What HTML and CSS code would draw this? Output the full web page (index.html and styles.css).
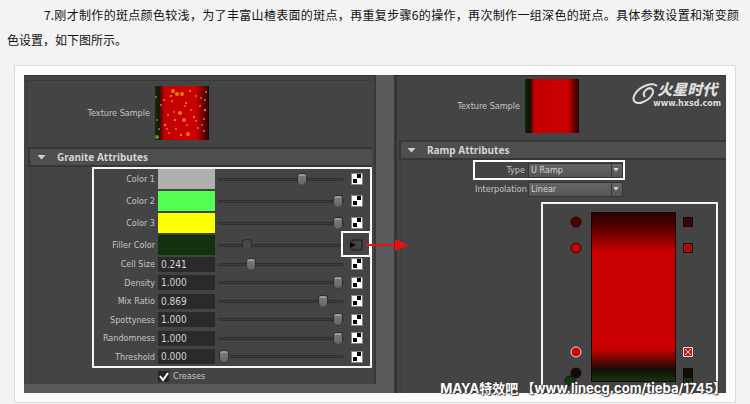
FILE: index.html
```html
<!DOCTYPE html>
<html lang="zh-CN">
<head>
<meta charset="utf-8">
<title>步骤 7</title>
<link rel="stylesheet" href="styles.css">
</head>
<body>
<svg class="defs" aria-hidden="true">
  <symbol id="checker" viewBox="0 0 12 12"><rect width="12" height="12" fill="#888"/><rect x="1" y="1" width="10" height="10" fill="#fff"/><path d="M6 1h4v4H6zM2 6h4v4H2z" fill="#000"/></symbol>
</svg>
<p class="step"><span class="line full">7.刚才制作的斑点颜色较浅，为了丰富山楂表面的斑点，再重复步骤6的操作，再次制作一组深色的斑点。具体参数设置和渐变颜</span><span class="line">色设置，如下图所示。</span></p>

<figure class="card">
  <div class="shot">
    <section class="pane granite">
      <div class="editor">
        <div class="sample">
          <span class="sample-label">Texture Sample</span>
          <svg class="swatch" viewBox="0 0 54 54">
            <defs>
              <linearGradient id="g1"><stop offset="0" stop-color="#102c10"/><stop offset=".08" stop-color="#1c1404"/><stop offset=".17" stop-color="#c40000"/><stop offset=".76" stop-color="#cc0000"/><stop offset="1" stop-color="#260300"/></linearGradient>
            </defs>
            <rect width="54" height="54" fill="url(#g1)"/>
            <g fill="#e87a10"><circle cx="18" cy="5" r="2"/><circle cx="22" cy="8" r="2"/><circle cx="27" cy="8" r="2"/><circle cx="9" cy="14" r="1"/><circle cx="17" cy="15" r="1"/><circle cx="25" cy="27" r="2"/><circle cx="13" cy="29" r="1"/><circle cx="36" cy="24" r="1"/><circle cx="45" cy="20" r="1"/><circle cx="32" cy="39" r="1"/><circle cx="21" cy="43" r="1"/><circle cx="14" cy="47" r="1"/><circle cx="33" cy="48" r="2"/><circle cx="49" cy="33" r="1"/><circle cx="43" cy="42" r="1"/><circle cx="41" cy="10" r="1"/></g>
            <g fill="#e8b020"><circle cx="16" cy="10" r="1"/><circle cx="31" cy="17" r="1"/><circle cx="20" cy="34" r="1"/><circle cx="39" cy="31" r="1"/><circle cx="26" cy="49" r="1"/><circle cx="50" cy="24" r="1"/><circle cx="35" cy="5" r="1"/><circle cx="10" cy="39" r="1"/></g>
            <g fill="#d76b78"><circle cx="6" cy="19" r="1"/><circle cx="29" cy="34" r="2"/><circle cx="30" cy="20" r="1"/><circle cx="51" cy="6" r="1"/><circle cx="50" cy="14" r="1"/><circle cx="41" cy="35" r="1"/><circle cx="19" cy="26" r="1"/><circle cx="49" cy="45" r="1"/><circle cx="12" cy="43" r="1"/></g>
            <g fill="#5f9a12"><circle cx="2" cy="34" r="1"/><circle cx="2" cy="51" r="2"/><circle cx="1" cy="11" r="1"/><circle cx="4" cy="43" r="1"/><circle cx="47" cy="39" r="1"/><circle cx="46" cy="12" r="1"/></g>
          </svg>
        </div>
        <h2 class="bar"><span class="caret"></span>Granite Attributes</h2>
        <div class="body">
          <div class="marked">
            <div class="colors">
              <div class="row"><label for="c1">Color 1</label><span class="chip gray"></span><input id="c1" type="range" value="68"><svg class="map"><use href="#checker"/></svg></div>
              <div class="row"><label for="c2">Color 2</label><span class="chip green"></span><input id="c2" type="range" value="100"><svg class="map"><use href="#checker"/></svg></div>
              <div class="row"><label for="c3">Color 3</label><span class="chip yellow"></span><input id="c3" type="range" value="100"><svg class="map"><use href="#checker"/></svg></div>
              <div class="row linked"><label for="c4">Filler Color</label><span class="chip dark"></span><input id="c4" type="range" value="20" class="off">
                <svg class="map" viewBox="0 0 12 12"><path d="M1 3V1h10v10H1V9" fill="none" stroke="#181818"/><path d="M-1 3l6 3-6 3z" fill="#000"/></svg>
                <span class="callout"></span>
                <svg class="arrow" viewBox="0 0 42 12"><path d="M0 5h30v2H0z" fill="#f20d0d"/><path d="M29 0l13 6-13 6z" fill="#f20d0d"/></svg>
              </div>
            </div>
            <div class="values">
              <div class="row"><label for="v1">Cell Size</label><input id="v1" class="num" type="text" value="0.241"><input type="range" aria-label="Cell Size" value="24"><svg class="map"><use href="#checker"/></svg></div>
              <div class="row"><label for="v2">Density</label><input id="v2" class="num" type="text" value="1.000"><input type="range" aria-label="Density" value="100"><svg class="map"><use href="#checker"/></svg></div>
              <div class="row"><label for="v3">Mix Ratio</label><input id="v3" class="num" type="text" value="0.869"><input type="range" aria-label="Mix Ratio" value="87"><svg class="map"><use href="#checker"/></svg></div>
              <div class="row"><label for="v4">Spottyness</label><input id="v4" class="num" type="text" value="1.000"><input type="range" aria-label="Spottyness" value="100"><svg class="map"><use href="#checker"/></svg></div>
              <div class="row"><label for="v5">Randomness</label><input id="v5" class="num" type="text" value="1.000"><input type="range" aria-label="Randomness" value="100"><svg class="map"><use href="#checker"/></svg></div>
              <div class="row"><label for="v6">Threshold</label><input id="v6" class="num" type="text" value="0.000"><input type="range" aria-label="Threshold" value="0"><svg class="map"><use href="#checker"/></svg></div>
            </div>
          </div>
          <label class="creases"><span class="tick"><input type="checkbox" checked><svg viewBox="0 0 11 11"><path d="M2 5l3 4 5-7" fill="none" stroke="#fff" stroke-width="2"/></svg></span>Creases</label>
        </div>
      </div>
    </section>

    <section class="pane ramp">
      <div class="sample">
        <span class="sample-label">Texture Sample</span>
        <span class="swatch plain"></span>
        <div class="logo">
          <svg viewBox="0 0 27 22"><g fill="none" stroke="#ddd"><path d="M25 3C20-1 8 3 3 11c-4 7 1 11 8 8 8-3 12-10 9-13-4-3-11 4-7 8" stroke-width="2"/><path d="M22 1C12 1 3 8 1 15" stroke-width="1"/></g></svg>
          <span class="logo-text"><b>火星时代</b><small>www.hxsd.com</small></span>
        </div>
      </div>
      <h2 class="bar"><span class="caret"></span>Ramp Attributes</h2>
      <div class="body">
        <div class="field boxed"><label for="type">Type</label><span class="pick"><select id="type"><option>U Ramp</option></select></span></div>
        <div class="field"><label for="interp">Interpolation</label><span class="pick"><select id="interp"><option>Linear</option></select></span></div>
        <div class="ramp-box">
          <svg viewBox="0 0 173 190">
            <defs><linearGradient id="g2" x2="0" y2="1"><stop offset="0" stop-color="#2c0000"/><stop offset=".07" stop-color="#480000"/><stop offset=".23" stop-color="#c80000"/><stop offset=".81" stop-color="#c80000"/><stop offset=".93" stop-color="#170c08"/><stop offset="1" stop-color="#12380f"/></linearGradient></defs>
            <rect x="48.500" y="8.500" width="84" height="169" fill="url(#g2)" stroke="#180606"/>
            <g stroke="#1c0808"><circle cx="33" cy="18" r="5" fill="#4a0000"/><circle cx="33" cy="44" r="5" fill="#cc0000"/><circle cx="33" cy="148" r="5" fill="#cc0000" stroke="#f0d8c8"/><circle cx="33" cy="169" r="5" fill="#120c08"/><circle cx="27" cy="177" r="5" fill="#123c12"/></g>
            <g stroke="#180404"><path d="M140.500 13.500h9v9h-9z" fill="#400404"/><path d="M142 15l6 6m0-6l-6 6"/><path d="M140.500 39.500h9v9h-9z" fill="#b80d0d"/><path d="M142 41l6 6m0-6l-6 6" stroke="#600"/><path d="M140.500 164.500h9v9h-9z" fill="#150e08"/><path d="M140.500 173.500h9v8h-9z" fill="#123c12"/><path d="M142 175l6 6m0-6l-6 6"/></g>
            <g stroke="#f4e8e8"><path d="M140.500 143.500h9v9h-9z" fill="#cc1010"/><path d="M142 145l6 6m0-6l-6 6"/></g>
          </svg>
        </div>
      </div>
    </section>
    <div class="watermark">MAYA特效吧 【www.linecg.com/tieba/1745】</div>
  </div>
</figure>
</body>
</html>
```
FILE: styles.css
```css
* { box-sizing: border-box; }

body {
  margin: 0;
  background: #f3f3f3;
  color: #111;
  font: 12px/25px "Noto Sans CJK SC", sans-serif;
}

.defs { position: absolute; width: 0; height: 0; }

.step { margin: 0; padding: 2px 11px 0 7px; }
.line { display: block; }
.full { padding-left: 37px; text-align: justify; text-align-last: justify; white-space: nowrap; }

.card {
  margin: 13px 14px 0;
  padding: 9px;
  border: 1px solid #ddd;
  background: #fbfbfb;
}

.shot {
  position: relative;
  display: grid;
  grid-template-columns: 370fr 332fr;
  color: #c4c4c4;
  font: 9px/14px "DejaVu Sans Condensed", "DejaVu Sans", sans-serif;
}

.pane { background: #444; min-width: 0; }
.granite { padding: 0 18px 9px 0; background: #5a5a5a; }
.editor { padding: 4px 2px 0; background: #444; border-right: 2px solid #383838; border-top: 1px solid #333; }
.ramp { border-left: 3px solid #353535; border-top: 1px solid #333; display: flex; flex-direction: column; }

.sample { display: flex; align-items: center; gap: 5px; }
.sample-label { width: 123px; text-align: right; white-space: nowrap; }
.granite .sample { height: 67px; border: 1px solid #3a3a3a; border-width: 1px 0 0 1px; padding: 0 0 2px 4px; }
.granite .sample-label { width: 119px; }
.ramp .sample { height: 64px; padding-bottom: 4px; }
.swatch { width: 54px; height: 54px; flex: none; }
.plain { background: linear-gradient(90deg, #102a0c, #0c1000 9%, #c40000 17%, #c80000 80%, #200000); }

.bar {
  display: flex;
  align-items: center;
  gap: 11px;
  height: 20px;
  margin: 0 0 0 2px;
  padding-left: 7px;
  border: 2px solid #363636;
  border-width: 2px 0 2px 2px;
  background: #4e4e4e;
  color: #d4d4d4;
  font: bold 10px/14px "Noto Sans", sans-serif;
}
.ramp .bar { padding-left: 6px; }
.caret { width: 9px; height: 5px; background: #d0d0d0; clip-path: polygon(0 0, 100% 0, 50% 100%); }
.body { margin-left: 4px; border-left: 1px solid #383838; }

.marked { margin-left: 61px; border: 2px solid #f4f4f4; }
.colors { display: grid; gap: 2px; }
.values { display: grid; grid-auto-rows: 1fr; height: 111px; }
.row {
  position: relative;
  display: grid;
  grid-template-columns: 61px 57px 1fr 12px;
  column-gap: 3px;
  align-items: center;
  padding-right: 7px;
}
.row label { text-align: right; white-space: nowrap; }
.colors .row { height: 20px; }
.chip { height: 20px; }
.gray { background: #b0b0b0; }
.green { background: #54ff54; }
.yellow { background: #ff0; }
.dark { background: #12320f; }
.num {
  width: 100%;
  height: 15px;
  padding: 0 3px;
  border: 0;
  background: #2a2a2a;
  color: #d4d4d4;
  font: inherit;
  font-size: 10px;
}
.map { width: 12px; height: 12px; overflow: visible; }

input[type="range"] {
  appearance: none;
  width: 100%;
  height: 14px;
  margin: 0;
  padding-right: 4px;
  background: none;
}
input[type="range"]::-webkit-slider-runnable-track {
  height: 3px;
  border: 1px solid #2f2f2f;
  border-radius: 2px;
  background: #3c3c3c;
}
input[type="range"]::-webkit-slider-thumb {
  appearance: none;
  width: 10px;
  height: 13px;
  margin-top: -6px;
  border: 1px solid #2c2c2c;
  border-radius: 3px 3px 5px 5px;
  background: linear-gradient(#999 0 2px, #777 2px, #666);
  clip-path: polygon(0 0, 100% 0, 100% 70%, 50% 100%, 0 70%);
}
.off::-webkit-slider-thumb { background: #484848 !important; }

.callout { position: absolute; right: -1px; top: -4px; width: 30px; height: 26px; border: 2px solid #fff; }
.arrow { position: absolute; right: -38px; top: 4px; z-index: 2; width: 42px; height: 12px; }

.creases { display: flex; align-items: center; gap: 4px; height: 16px; padding-left: 127px; }
.tick { position: relative; width: 11px; height: 11px; background: #262626; }
.tick input { appearance: none; display: block; width: 11px; height: 11px; margin: 0; }
.tick svg { position: absolute; inset: 0; pointer-events: none; }

.logo { display: flex; margin: 0 5px 26px auto; color: #ddd; }
.logo svg { width: 27px; height: 22px; margin-top: 4px; }
.logo-text { display: flex; flex-direction: column; margin-left: -6px; }
.logo b { font: italic 900 15px/20px "Noto Sans CJK SC", sans-serif; text-align: center; }
.logo small { font: bold 8px/9px "DejaVu Sans", sans-serif; }

.ramp .body { flex: 1; display: flex; flex-direction: column; }
.field { display: flex; align-items: center; gap: 3px; align-self: flex-start; height: 16px; margin: 1px 0 0 71px; padding-left: 2px; }
.boxed { height: 20px; margin-top: 0; padding-left: 0; border: 2px solid #fff; }
.field label { width: 50px; text-align: right; white-space: nowrap; }
.pick { position: relative; width: 95px; height: 15px; }
.pick::after { content: ""; position: absolute; right: 4px; top: 5px; width: 6px; height: 4px; background: #ddd; clip-path: polygon(0 0, 100% 0, 50% 100%); pointer-events: none; }
.pick select {
  appearance: none;
  display: block;
  width: 100%;
  height: 15px;
  padding: 0 2px;
  border: 1px solid #333;
  background: linear-gradient(90deg, transparent 82px, #383838 82px 83px, transparent 83px), linear-gradient(#666, #555);
  color: #d4d4d4;
  font: inherit;
  line-height: 12px;
}
.ramp-box { flex: 1; align-self: flex-end; margin: 5px 8px 0 0; border: 2px solid #f4f4f4; border-bottom: 0; overflow: hidden; }
.ramp-box svg { display: block; width: 173px; height: 190px; margin-bottom: -10px; }

.watermark {
  position: absolute;
  right: 0;
  bottom: -3px;
  color: #fff;
  font: 700 13px/16px Inter, "Noto Sans CJK SC", sans-serif;
  white-space: nowrap;
  text-shadow: 1px 1px 1px #333, -1px 0 1px #444, 0 -1px 1px #444;
}
```
